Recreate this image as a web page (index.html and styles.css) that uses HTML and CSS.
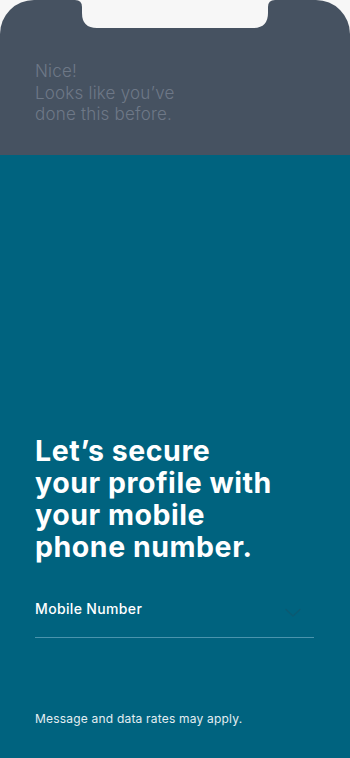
FILE: index.html
```html
<!DOCTYPE html>
<html lang="en">
<head>
<meta charset="utf-8">
<title>Secure profile</title>
<link rel="stylesheet" href="styles.css">
</head>
<body>
<div class="screen">
  <svg class="notch" width="350" height="30" viewBox="0 0 350 30" aria-hidden="true">
    <path d="M75 0 Q82 0 82 7 L82 13 Q82 28 97 28 L253 28 Q268 28 268 13 L268 7 Q268 0 275 0 Z" fill="#f7f7f7"/>
  </svg>
  <header class="header">
    <p class="greeting">Nice!<br>Looks like you’ve<br>done this before.</p>
  </header>
  <main class="main">
    <h1 class="title">Let’s secure<br>your profile with<br>your mobile<br>phone number.</h1>
    <div class="field">
      <span class="field-label">Mobile Number</span>
      <svg class="chevron" width="18" height="10" viewBox="0 0 18 10" aria-hidden="true">
        <path d="M2 1.5 L9 8 L16 1.5" fill="none" stroke="#0b5a73" stroke-width="1.5" stroke-linecap="round" stroke-linejoin="round"/>
      </svg>
    </div>
    <p class="note">Message and data rates may apply.</p>
  </main>
</div>
</body>
</html>
```
FILE: styles.css
```css
html, body {
  margin: 0;
  padding: 0;
  background: #f7f7f7;
}
.screen {
  position: relative;
  width: 350px;
  height: 758px;
  display: flex;
  flex-direction: column;
  font-family: Inter, "Noto Sans", sans-serif;
  overflow: hidden;
}
.notch {
  position: absolute;
  top: 0;
  left: 0;
}
.header {
  height: 155px;
  box-sizing: border-box;
  background: #465261;
  border-radius: 34px 34px 0 0;
  padding: 61px 35px 0;
}
.greeting {
  margin: 0;
  color: #6e7887;
  font-size: 17px;
  line-height: 21.5px;
  font-weight: 300;
  letter-spacing: 0.2px;
}
.main {
  flex: 1;
  background: #00637f;
  display: flex;
  flex-direction: column;
  padding: 280px 36px 31px 35px;
}
.title {
  margin: 0;
  color: #ffffff;
  font-size: 28.5px;
  line-height: 32px;
  font-weight: 700;
  letter-spacing: 0.55px;
}
.field {
  margin-top: 37px;
  display: flex;
  align-items: center;
  justify-content: space-between;
  padding-bottom: 19px;
  border-bottom: 1px solid #4a94ad;
}
.field-label {
  color: #ffffff;
  font-size: 14px;
  line-height: 18px;
  font-weight: 500;
  letter-spacing: 0.35px;
}
.chevron {
  margin-right: 12px;
  margin-top: 8px;
}
.note {
  margin: auto 0 0;
  color: #e4eef2;
  font-size: 12px;
  line-height: 16px;
  letter-spacing: 0.2px;
}
```
